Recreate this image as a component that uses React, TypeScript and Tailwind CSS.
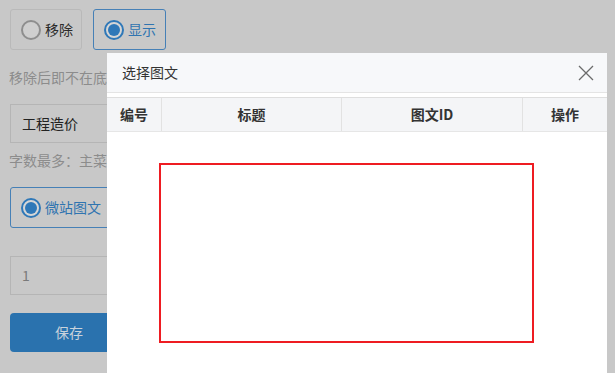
import React from 'react';

const font = { fontFamily: '"Noto Sans CJK SC", "Noto Sans", sans-serif' };

function Radio({ checked }: { checked: boolean }) {
  if (!checked) {
    return <span className="inline-block w-[20px] h-[20px] rounded-full border-2 border-[#8e8e8e] bg-[#cfcfcf]" />;
  }
  return (
    <span className="inline-flex items-center justify-center w-[20px] h-[20px] rounded-full border-2 border-[#2f78b8] bg-[#d6d6d6]">
      <span className="w-[12px] h-[12px] rounded-full bg-[#2f78b8]" />
    </span>
  );
}

export default function App() {
  const columns = [
    { label: '编号', w: 'w-[55px]' },
    { label: '标题', w: 'w-[180px]' },
    { label: '图文ID', w: 'w-[181px]' },
    { label: '操作', w: 'flex-1' },
  ];

  return (
    <div className="relative w-[615px] h-[373px] overflow-hidden bg-[#c8c8c8] text-[14px]" style={font}>
      {/* Page behind the overlay */}
      <div className="flex flex-col pl-[10px] pt-[9px]">
        <div className="flex gap-[11px]">
          <div className="flex items-center gap-[4px] h-[41px] w-[72px] pl-[10px] border border-[#b9b9b9] rounded-[3px] text-[#2b2b2b]">
            <Radio checked={false} />
            <span>移除</span>
          </div>
          <div className="flex items-center gap-[4px] h-[41px] w-[73px] pl-[10px] border border-[#4680b6] rounded-[3px] text-[#2f74b0]">
            <Radio checked />
            <span>显示</span>
          </div>
        </div>
        <div className="mt-[17px] -ml-[1px] w-[98px] overflow-hidden whitespace-nowrap text-[#8c8c8c] leading-[20px]">移除后即不在底部菜单显示</div>
        <div className="mt-[17px] h-[39px] w-[400px] border border-[#b5b5b5] flex items-center pl-[11px] text-[#222]">工程造价</div>
        <div className="mt-[7px] -ml-[1px] w-[98px] overflow-hidden whitespace-nowrap text-[#8c8c8c] leading-[20px]">字数最多：主菜单4个汉字</div>
        <div className="mt-[17px] flex items-center gap-[4px] h-[41px] w-[200px] pl-[10px] border border-[#4680b6] rounded-[3px] text-[#2f74b0]">
          <Radio checked />
          <span>微站图文</span>
        </div>
        <div className="mt-[28px] h-[39px] w-[400px] border border-[#b5b5b5] flex items-center pl-[11px] text-[#7a7a7a]">1</div>
        <div className="mt-[18px] h-[39px] w-[200px] rounded-[4px] bg-[#2a72ae] flex items-center justify-center pr-[82px] text-[#c9d3dc]">保存</div>
      </div>

      {/* Modal */}
      <div className="absolute left-[107px] top-[53px] w-[500px] h-[330px] bg-white flex flex-col">
        <div className="h-[40px] bg-[#f7f8fa] border-b border-[#e4e4e4] flex items-center justify-between pl-[15px] pr-[13px]">
          <span className="text-[#333]">选择图文</span>
          <svg width="16" height="16" viewBox="0 0 16 16" fill="none" stroke="#6b6b6b" strokeWidth="1.3">
            <path d="M1 1 L15 15 M15 1 L1 15" />
          </svg>
        </div>
        <div className="mt-[4px] border-t border-[#dedede] flex h-[35px] bg-[#f4f5f7] border-b border-b-[#e6e6e6]">
          {columns.map((c, i) => (
            <div
              key={c.label}
              className={`${c.w} flex items-center justify-center font-bold text-[#333] ${i < 3 ? 'border-r border-[#e2e2e2]' : ''}`}
            >
              {c.label}
            </div>
          ))}
        </div>
        <div className="ml-[52px] mt-[31px] w-[375px] h-[180px] border-2 border-[#ee1c22]" />
      </div>
    </div>
  );
}
